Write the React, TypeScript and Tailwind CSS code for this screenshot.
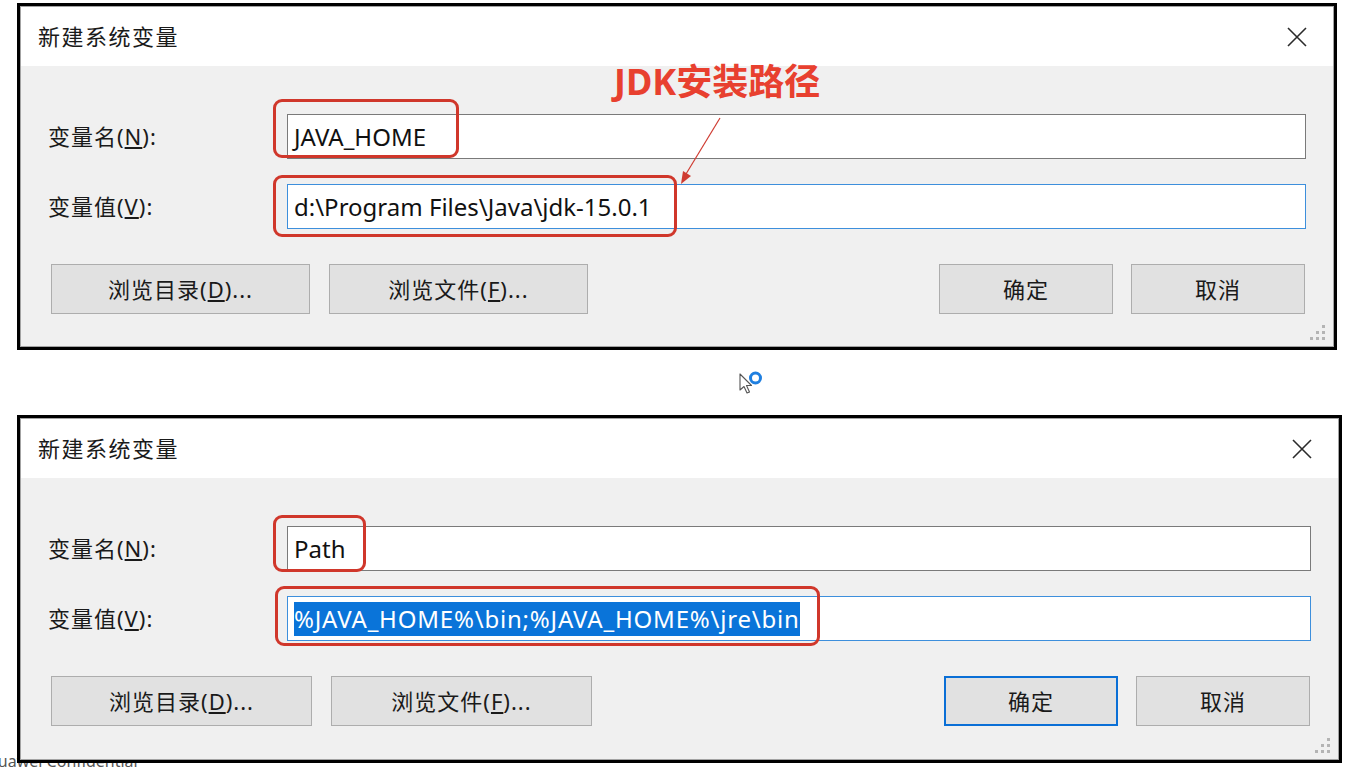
import React from "react";

type DialogProps = {
  size: string;
  name: string;
  value: React.ReactNode;
  okFocused?: boolean;
  nameBox: string;
  valueBox: string;
  btnW: string;
  children?: React.ReactNode;
};

const CloseIcon = () => (
  <svg width="22" height="22" viewBox="0 0 22 22">
    <path d="M2 2 L20 20 M20 2 L2 20" stroke="#2b2b2b" strokeWidth="1.6" fill="none" />
  </svg>
);

const Grip = () => (
  <svg width="18" height="18" viewBox="0 0 18 18" className="absolute right-[7px] bottom-[5px]">
    <rect x="14" y="2" width="3" height="3" fill="#b4b4b4" />
    <rect x="8" y="8" width="3" height="3" fill="#b4b4b4" />
    <rect x="14" y="8" width="3" height="3" fill="#b4b4b4" />
    <rect x="2" y="14" width="3" height="3" fill="#b4b4b4" />
    <rect x="8" y="14" width="3" height="3" fill="#b4b4b4" />
    <rect x="14" y="14" width="3" height="3" fill="#b4b4b4" />
  </svg>
);

const Dialog: React.FC<DialogProps> = ({ size, name, value, okFocused, nameBox, valueBox, btnW, children }) => {
  return (
    <div className={`relative z-10 border-[3px] border-black bg-white ${size}`}>
      <div className="flex h-full flex-col border border-[#a3a3a3]">
        <div className="flex h-[59px] shrink-0 items-center justify-between pl-[17px] pr-[25px] bg-white">
          <span className="text-[22px] tracking-[1.5px] text-[#1a1a1a]">新建系统变量</span>
          <CloseIcon />
        </div>
        <div className="relative flex flex-1 flex-col bg-[#f0f0f0] pt-[48px]">
          <div className="flex h-[45px] items-center pl-[27px] pr-[27px]">
            <div className="w-[239px] text-[22px] tracking-[1px] text-[#1a1a1a]">
              变量名(<span className="underline">N</span>):
            </div>
            <div className="relative h-full flex-1">
              <div className="flex h-full items-center border border-[#7a7a7a] bg-white pl-[6px] text-[24px] text-[#111]">
                {name}
              </div>
              <div className={`absolute rounded-[9px] border-[3px] border-[#d0372b] ${nameBox}`} />
            </div>
          </div>
          <div className="mt-[25px] flex h-[45px] items-center pl-[27px] pr-[27px]">
            <div className="w-[239px] text-[22px] tracking-[1px] text-[#1a1a1a]">
              变量值(<span className="underline">V</span>):
            </div>
            <div className="relative h-full flex-1">
              <div className="flex h-full items-center border border-[#3d8fdc] bg-white pl-[6px] text-[24px] text-[#111]">
                {value}
              </div>
              <div className={`absolute rounded-[9px] border-[3px] border-[#d0372b] ${valueBox}`} />
            </div>
          </div>
          <div className="mt-[35px] flex h-[50px] items-stretch justify-between pl-[30px] pr-[28px] text-[22px] tracking-[1px] text-[#1a1a1a]">
            <div className="flex gap-[19px]">
              <button className={`flex items-center justify-center border border-[#adadad] bg-[#e1e1e1] ${btnW}`}>
                浏览目录(<span className="underline">D</span>)...
              </button>
              <button className={`flex items-center justify-center border border-[#adadad] bg-[#e1e1e1] ${btnW}`}>
                浏览文件(<span className="underline">F</span>)...
              </button>
            </div>
            <div className="flex gap-[18px]">
              <button
                className={
                  okFocused
                    ? "flex w-[174px] items-center justify-center border-2 border-[#0a6fd6] bg-[#e1e1e1]"
                    : "flex w-[174px] items-center justify-center border border-[#adadad] bg-[#e1e1e1]"
                }
              >
                确定
              </button>
              <button className="flex w-[174px] items-center justify-center border border-[#adadad] bg-[#e1e1e1]">
                取消
              </button>
            </div>
          </div>
          <Grip />
        </div>
      </div>
      {children}
    </div>
  );
};

export default function App() {
  return (
    <div className="relative h-[768px] w-[1345px] overflow-hidden bg-white font-['Noto_Sans','Noto_Sans_CJK_SC',sans-serif]">
      <div className="pl-[17px] pt-[3px]">
        <Dialog
          size="w-[1320px] h-[347px]"
          name="JAVA_HOME"
          value="d:\Program Files\Java\jdk-15.0.1"
          nameBox="left-[-14px] top-[-15px] w-[186px] h-[59px]"
          valueBox="left-[-14px] top-[-9px] w-[404px] h-[62px]"
          btnW="w-[259px]"
        >
          <div className="absolute left-[594px] top-[58px] text-[36px] font-bold leading-none text-[#e8402f]">
            JDK安装路径
          </div>
          <svg className="absolute left-[650px] top-[106px]" width="70" height="80" viewBox="0 0 70 80">
            <line x1="50" y1="6" x2="16" y2="62" stroke="#cf3b31" strokeWidth="1.2" />
            <polygon points="11,72 21,64 13,59" fill="#cf3b31" />
          </svg>
        </Dialog>
      </div>
      <div className="flex h-[65px] pl-[738px] pt-[21px]">
        <svg width="26" height="28" viewBox="0 0 26 28">
          <path d="M2 3 L2 19 L6 15.5 L9 22 L11.5 21 L8.5 14.5 L13.5 14.5 Z" fill="#fff" stroke="#555" strokeWidth="1.1" strokeLinejoin="round" />
          <circle cx="17.5" cy="7" r="5" fill="none" stroke="#1f7fe0" strokeWidth="3" />
        </svg>
      </div>
      <div className="pl-[17px]">
        <Dialog
          size="w-[1325px] h-[348px]"
          name="Path"
          value={
            <span className="bg-[#0a74d9] leading-[34px] tracking-[0.8px] text-white">
              %JAVA_HOME%\bin;%JAVA_HOME%\jre\bin
            </span>
          }
          okFocused
          nameBox="left-[-14px] top-[-11px] w-[93px] h-[57px]"
          valueBox="left-[-12px] top-[-10px] w-[545px] h-[60px]"
          btnW="w-[261px]"
        />
      </div>
      <div className="absolute left-[-14px] top-[749px] z-0 text-[16px] text-[#555]">Huawei Confidential</div>
    </div>
  );
}
